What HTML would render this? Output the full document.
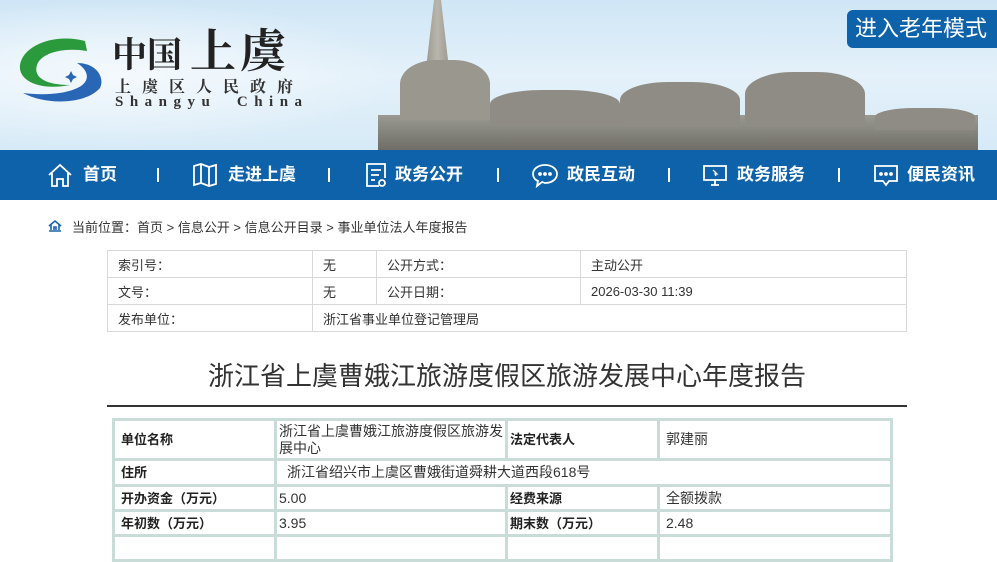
<!DOCTYPE html>
<html><head><meta charset="utf-8"><style>
*{margin:0;padding:0;box-sizing:border-box}
body{width:997px;height:535px;overflow:hidden;background:#fff;font-family:"Liberation Sans","Noto Sans CJK SC",sans-serif;color:#333;position:relative}
.abs{position:absolute}
.hdr{left:0;top:0;width:997px;height:150px;background:linear-gradient(180deg,#cfe6f6 0%,#e4f1fa 50%,#d6eaf7 100%)}
.nav{left:0;top:150px;width:997px;height:50px;background:#0d62aa;color:#fff}
.nav .it{position:absolute;top:0;height:50px;line-height:50px;font-size:17px;font-weight:bold}
.nav svg{position:absolute;top:12px}
.t1 td{border:1px solid #d8d8d8;font-size:13px;color:#333;padding-left:10px;height:27px}
.t2 td{border:3px solid #c9dcd8;font-size:14px;color:#333;padding-left:6px;line-height:17px}
.t2 td.b{font-weight:bold;color:#222;font-size:13px}
</style></head><body>
<div class="abs hdr">
 <div class="abs" style="left:0;top:0;width:400px;height:150px;background:radial-gradient(ellipse at 30% 50%,#f4f9fd,transparent 70%)"></div>
 <svg class="abs" style="left:15px;top:33px" width="88" height="75" viewBox="0 0 88 75">
  <path d="M70 8 C40 0 8 12 5 32 C3 48 25 58 55 52 C30 52 18 44 22 32 C26 20 48 14 72 18 Z" fill="#2b9a3c"/>
  <path d="M8 60 C30 72 70 72 85 55 C90 45 82 30 62 30 C75 38 76 50 60 56 C45 62 25 62 8 60 Z" fill="#2a66b6"/>
  <path d="M56 38 l2 4 4 2 -4 2 -2 4 -2 -4 -4 -2 4 -2z" fill="#2a66b6"/>
 </svg>
 <div class="abs" style="left:112px;top:26px;line-height:44px;font-size:35px;font-weight:bold;color:#222;font-family:'Noto Serif CJK SC',serif;white-space:nowrap">中国<span style="font-size:46px;margin-left:8px;letter-spacing:4px">上虞</span></div>
 <div class="abs" style="left:115px;top:77px;line-height:18px;font-size:16px;color:#333;letter-spacing:11px;font-family:'Noto Serif CJK SC',serif;font-weight:bold;white-space:nowrap">上虞区人民政府</div>
 <div class="abs" style="left:115px;top:94px;line-height:16px;font-size:15px;color:#333;letter-spacing:6.5px;font-family:'Liberation Serif',serif;font-weight:bold;white-space:nowrap">Shangyu&nbsp;&nbsp;China</div>
 <div class="abs" style="left:378px;top:115px;width:600px;height:35px;background:linear-gradient(180deg,#9a9a92,#6f6d66)"></div>
 <div class="abs" style="left:420px;top:0;width:35px;height:120px;background:linear-gradient(90deg,#8d8a82,#b9b6ac,#8d8a82);clip-path:polygon(40% 0,60% 0,100% 100%,0 100%)"></div>
 <div class="abs" style="left:400px;top:60px;width:90px;height:60px;background:#9a978e;border-radius:40% 40% 0 0"></div>
 <div class="abs" style="left:490px;top:90px;width:130px;height:35px;background:#8f8c85;border-radius:40% 40% 0 0"></div>
 <div class="abs" style="left:620px;top:82px;width:120px;height:45px;background:#8f8c85;border-radius:40% 40% 0 0"></div>
 <div class="abs" style="left:745px;top:72px;width:120px;height:55px;background:#8f8c85;border-radius:40% 40% 0 0"></div>
 <div class="abs" style="left:875px;top:108px;width:100px;height:22px;background:#8f8c85;border-radius:40% 40% 0 0"></div>
 <div class="abs" style="left:847px;top:10px;width:150px;height:38px;background:#0d62aa;border-radius:6px 0 0 6px;color:#fff;font-size:22px;line-height:38px;padding-left:8px;white-space:nowrap">进入老年模式</div>
</div>
<div class="abs nav">
 <svg style="left:47px" width="26" height="26" viewBox="0 0 26 26" fill="none" stroke="#fff" stroke-width="1.8"><path d="M2 13 L13 3 L24 13 M5 11 V24 H10 V17 H16 V24 H21 V11"/></svg>
 <div class="it" style="left:83px">首页</div>
 <div class="abs" style="left:157px;top:18px;width:2px;height:14px;background:#fff"></div>
 <svg style="left:192px" width="26" height="26" viewBox="0 0 26 26" fill="none" stroke="#fff" stroke-width="1.8"><path d="M2 4 L9 2 L17 5 L24 3 V22 L17 24 L9 21 L2 23 Z M9 2 V21 M17 5 V24"/></svg>
 <div class="it" style="left:228px">走进上虞</div>
 <div class="abs" style="left:328px;top:18px;width:2px;height:14px;background:#fff"></div>
 <svg style="left:365px" width="22" height="26" viewBox="0 0 22 26" fill="none" stroke="#fff" stroke-width="1.8"><path d="M14 24 H2 V2 H20 V16 M6 8 H16 M6 13 H14 M6 18 H10"/><circle cx="17" cy="21" r="3"/></svg>
 <div class="it" style="left:395px">政务公开</div>
 <div class="abs" style="left:497px;top:18px;width:2px;height:14px;background:#fff"></div>
 <svg style="left:531px" width="28" height="26" viewBox="0 0 28 26" fill="none" stroke="#fff" stroke-width="1.8"><path d="M14 3 C7 3 2 7 2 12 C2 15 4 18 7 19 L6 24 L11 20 C12 20 13 21 14 21 C21 21 26 17 26 12 C26 7 21 3 14 3Z"/><circle cx="9" cy="12" r="1" fill="#fff"/><circle cx="14" cy="12" r="1" fill="#fff"/><circle cx="19" cy="12" r="1" fill="#fff"/></svg>
 <div class="it" style="left:567px">政民互动</div>
 <div class="abs" style="left:668px;top:18px;width:2px;height:14px;background:#fff"></div>
 <svg style="left:702px" width="26" height="26" viewBox="0 0 26 26" fill="none" stroke="#fff" stroke-width="1.8"><path d="M2 4 H24 V18 H2 Z M9 23 H17 M13 18 V23"/><path d="M11 8 L15 12 L13 12 L14 14" stroke-width="1.3"/></svg>
 <div class="it" style="left:737px">政务服务</div>
 <div class="abs" style="left:838px;top:18px;width:2px;height:14px;background:#fff"></div>
 <svg style="left:873px" width="26" height="26" viewBox="0 0 26 26" fill="none" stroke="#fff" stroke-width="1.8"><path d="M2 4 H24 V19 H16 L13 23 L10 19 H2 Z"/><circle cx="8" cy="12" r="1" fill="#fff"/><circle cx="13" cy="12" r="1" fill="#fff"/><circle cx="18" cy="12" r="1" fill="#fff"/></svg>
 <div class="it" style="left:907px">便民资讯</div>
</div>
<svg class="abs" style="left:48px;top:219px" width="14" height="13" viewBox="0 0 14 13" fill="none" stroke="#1a64ac" stroke-width="1.6"><path d="M1 7 L7 2 L13 7 M3 6 V11 M11 6 V11 M1 12 H13 M6 11 V8 H8 V11"/></svg>
<div class="abs" style="left:72px;top:217px;font-size:13px;color:#333">当前位置：首页 &gt; 信息公开 &gt; 信息公开目录 &gt; 事业单位法人年度报告</div>
<table class="abs t1" style="left:107px;top:250px;width:800px;border-collapse:collapse">
<tr><td style="width:205px">索引号：</td><td style="width:64px">无</td><td style="width:204px">公开方式：</td><td>主动公开</td></tr>
<tr><td>文号：</td><td>无</td><td>公开日期：</td><td>2026-03-30 11:39</td></tr>
<tr><td>发布单位：</td><td colspan="3">浙江省事业单位登记管理局</td></tr>
</table>
<div class="abs" style="left:0;top:356px;width:1014px;text-align:center;font-size:26px;color:#333">浙江省上虞曹娥江旅游度假区旅游发展中心年度报告</div>
<div class="abs" style="left:107px;top:405px;width:800px;height:2px;background:#333"></div>
<table class="abs t2" style="left:112px;top:418px;width:781px;border-collapse:collapse">
<tr style="height:40px"><td class="b" style="width:162px">单位名称</td><td style="width:231px;padding-left:2px">浙江省上虞曹娥江旅游度假区旅游发展中心</td><td class="b" style="width:152px;padding-left:2px">法定代表人</td><td>郭建丽</td></tr>
<tr style="height:26px"><td class="b">住所</td><td colspan="3" style="padding-left:10px">浙江省绍兴市上虞区曹娥街道舜耕大道西段618号</td></tr>
<tr style="height:25px"><td class="b">开办资金（万元）</td><td style="padding-left:2px">5.00</td><td class="b" style="padding-left:2px">经费来源</td><td>全额拨款</td></tr>
<tr style="height:25px"><td class="b">年初数（万元）</td><td style="padding-left:2px">3.95</td><td class="b" style="padding-left:2px">期末数（万元）</td><td>2.48</td></tr>
<tr style="height:25px"><td></td><td></td><td></td><td></td></tr>
</table>
</body></html>
